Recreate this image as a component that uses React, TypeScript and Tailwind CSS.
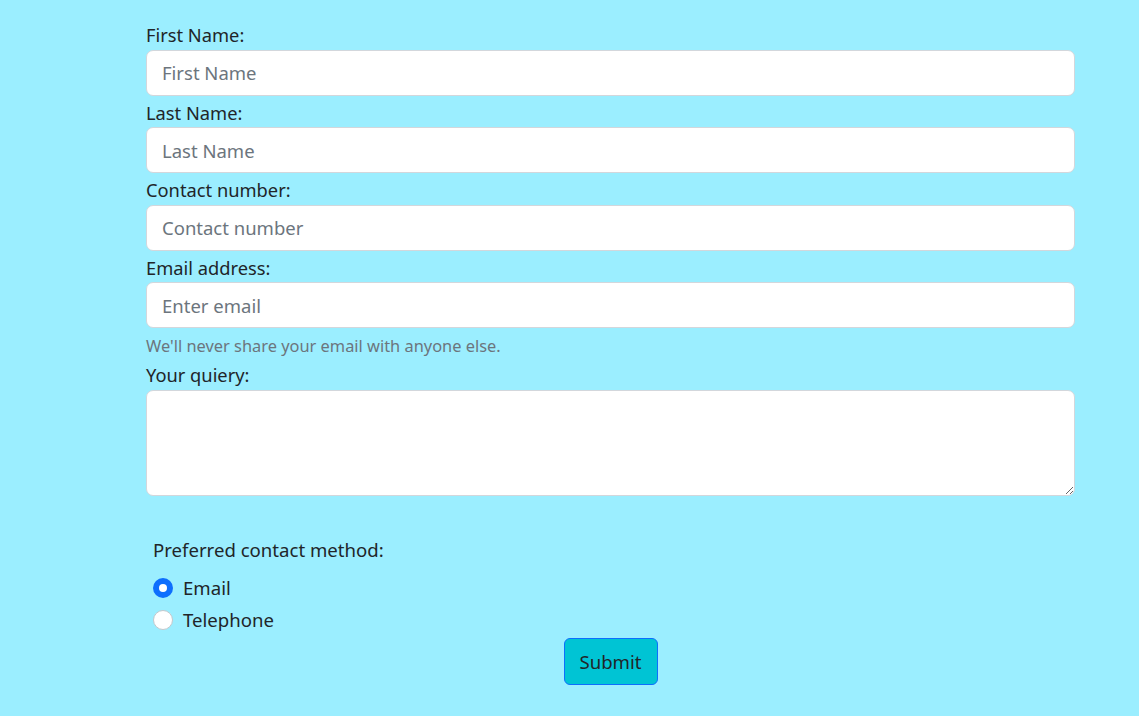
import { useState } from 'react';

const font = { fontFamily: '"Noto Sans", "Open Sans", sans-serif' };

type FieldProps = {
	label: string;
	placeholder: string;
	type?: string;
};

function Field({ label, placeholder, type = 'text' }: FieldProps) {
	return (
		<div>
			<label className="mt-[3px] mb-[0.5px] block h-[28px] text-[18.3px] leading-[28px] text-[#212529]">
				{label}
			</label>
			<input
				type={type}
				placeholder={placeholder}
				className="block h-[46px] w-full rounded-[7px] border border-[#d3d7dc] bg-white px-[15px] text-[18.5px] text-[#212529] outline-none placeholder:text-[#6c757d]"
			/>
		</div>
	);
}

export default function App() {
	const [method, setMethod] = useState('email');

	return (
		<div className="min-h-screen bg-[#9beeff]" style={font}>
			<form className="ml-[146px] w-[929px] pt-[18px]">
				<Field label="First Name:" placeholder="First Name" />
				<Field label="Last Name:" placeholder="Last Name" />
				<Field label="Contact number:" placeholder="Contact number" />
				<Field label="Email address:" placeholder="Enter email" type="email" />
				<p className="mt-[6px] h-[24px] text-[16.4px] leading-[24px] text-[#6c757d]">
					We'll never share your email with anyone else.
				</p>

				<label className="mt-[3px] mb-[1px] block h-[28px] text-[18.3px] leading-[28px] text-[#212529]">
					Your quiery:
				</label>
				<textarea className="block h-[106px] w-full rounded-[7px] border border-[#d3d7dc] bg-white px-[15px] py-2 text-[18px] outline-none" />

				<fieldset className="mt-[40px] pl-[7px] text-[18.6px] text-[#212529]">
					<legend className="h-[28px] leading-[28px]">Preferred contact method:</legend>
					<div className="mt-[8px] flex flex-col">
						{[
							{ id: 'email', label: 'Email' },
							{ id: 'phone', label: 'Telephone' },
						].map((opt) => (
							<label
								key={opt.id}
								className="flex h-[32px] cursor-pointer items-center gap-[10px] leading-[28px]"
								onClick={() => setMethod(opt.id)}
							>
								<span
									className={
										method === opt.id
											? 'flex h-[20px] w-[20px] items-center justify-center rounded-full bg-[#0d6efd]'
											: 'flex h-[20px] w-[20px] items-center justify-center rounded-full border border-[#c4c8cc] bg-white'
									}
								>
									{method === opt.id && <span className="h-[8px] w-[8px] rounded-full bg-white" />}
								</span>
								{opt.label}
							</label>
						))}
					</div>
				</fieldset>

				<div className="mt-[2px] flex justify-center">
					<button
						type="button"
						className="h-[47px] w-[94px] rounded-[6px] border border-[#0d6efd] bg-[#00c4d4] text-[18.6px] text-[#212529]"
					>
						Submit
					</button>
				</div>
			</form>
		</div>
	);
}
